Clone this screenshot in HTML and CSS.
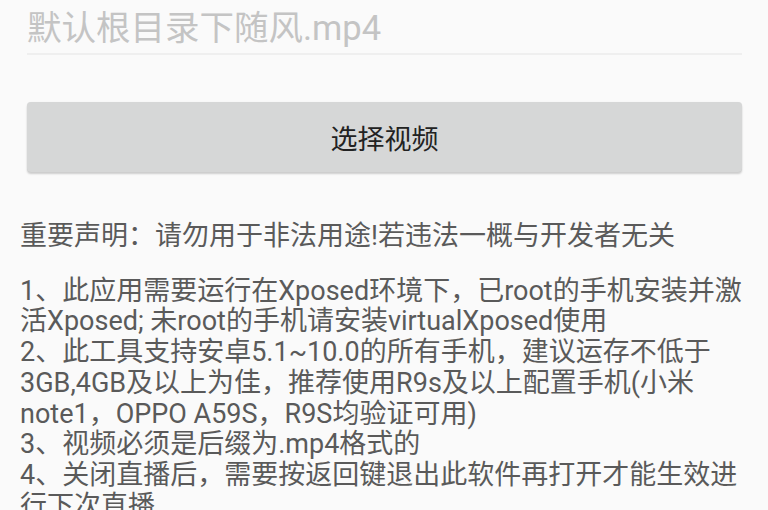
FILE: index.html
```html
<!DOCTYPE html>
<html lang="zh-CN">
<head>
<meta charset="utf-8">
<title>随风</title>
<link rel="stylesheet" href="styles.css">
</head>
<body>
<div class="page">
  <div class="field">
    <input class="field-input" type="text" placeholder="默认根目录下随风.mp4">
  </div>
  <button class="pick-btn" type="button">选择视频</button>
  <div class="notice">
    <p class="notice-title">重要声明：请勿用于非法用途!若违法一概与开发者无关</p>
    <p class="notice-body">1、此应用需要运行在Xposed环境下，已root的手机安装并激活Xposed; 未root的手机请安装virtualXposed使用<br>2、此工具支持安卓5.1~10.0的所有手机，建议运存不低于3GB,4GB及以上为佳，推荐使用R9s及以上配置手机(小米note1，OPPO A59S，R9S均验证可用)<br>3、视频必须是后缀为.mp4格式的<br>4、关闭直播后，需要按返回键退出此软件再打开才能生效进行下次直播</p>
  </div>
</div>
</body>
</html>
```

FILE: styles.css
```css
html, body {
  margin: 0;
  padding: 0;
  background: #fafafa;
  overflow: hidden;
}
body {
  font-family: "Roboto", "Noto Sans CJK SC", sans-serif;
}
.page {
  display: flex;
  flex-direction: column;
}
.field {
  margin: 0 26px 0 27px;
  padding-top: 8px;
  border-bottom: 2px solid #efefef;
  padding-bottom: 5px;
}
.field-input {
  display: block;
  width: 100%;
  box-sizing: border-box;
  border: none;
  outline: none;
  background: transparent;
  padding: 0;
  margin: 0;
  height: 40px;
  font-family: "Roboto", "Noto Sans CJK SC", sans-serif;
  font-size: 34.5px;
  color: #333;
}
.field-input::placeholder {
  color: #c4c4c4;
}
.pick-btn {
  margin: 47px 26px 0 27px;
  height: 70px;
  border: none;
  border-radius: 4px;
  background: #d6d7d7;
  box-shadow: 0 2px 2px rgba(0, 0, 0, 0.18), 0 0 1px rgba(0, 0, 0, 0.08);
  font-family: "Roboto", "Noto Sans CJK SC", sans-serif;
  font-size: 27px;
  color: #222;
  padding: 0;
}
.notice {
  margin: 49px 20px 0 20px;
  color: #5a5a5a;
  font-size: 27px;
  line-height: 30.7px;
}
.notice p {
  margin: 0;
}
.notice-title {
  margin-bottom: 24px !important;
}
```
